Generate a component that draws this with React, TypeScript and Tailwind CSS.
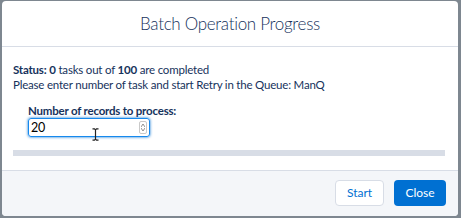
import React, { useState } from "react"

const App = () => {
  const [count, setCount] = useState("20")

  return (
    <div className="w-[461px] h-[218px] bg-[#7e8790] pl-[2px] pr-[3px] pt-[1px] pb-[2px] font-['Lato','Noto_Sans',sans-serif] text-[#16325c]">
      <div className="flex flex-col h-full bg-white rounded-[4px] overflow-hidden">
        <div className="h-[46px] flex items-center justify-center border-b border-[#d8dde6] shrink-0">
          <h2 className="text-[17px] font-light tracking-[-0.3px]">Batch Operation Progress</h2>
        </div>
        <div className="flex-1 bg-white pl-[11px] pr-[11px] pt-[15px] text-[11.5px] tracking-[-0.2px] text-[#16325c]">
          <p className="leading-[15px]">
            <b>Status:</b> <b>0</b> tasks out of <b>100</b> are completed
          </p>
          <p className="leading-[15px]">Please enter number of task and start Retry in the Queue: ManQ</p>
          <div className="pl-[15px] pt-[12px]">
            <label className="block font-bold leading-[14px] text-[11.5px]">Number of records to process:</label>
            <div className="relative w-[122px]">
              <input
                type="text"
                value={count}
                onChange={(e) => setCount(e.target.value)}
                className="w-full h-[19px] border border-[#1589ee] rounded-[3px] shadow-[0_0_3px_#0070d2] px-[2px] text-[12.5px] text-black outline-none"
              />
              <div className="absolute right-[3px] top-[3px] h-[13px] w-[8px] rounded-[2px] border border-[#c9c9c9] flex flex-col items-center justify-center gap-[1px]">
                <svg width="4" height="3" viewBox="0 0 4 3">
                  <path d="M0 3 L2 0 L4 3" fill="none" stroke="#777" strokeWidth="0.8" />
                </svg>
                <svg width="4" height="3" viewBox="0 0 4 3">
                  <path d="M0 0 L2 3 L4 0" fill="none" stroke="#777" strokeWidth="0.8" />
                </svg>
              </div>
              <svg className="absolute left-[64px] top-[10px]" width="7" height="13" viewBox="0 0 7 13">
                <path d="M0.5 0.8 H2.5 L3.5 1.8 L4.5 0.8 H6.5 M3.5 1.8 V11.2 M0.5 12.2 H2.5 L3.5 11.2 L4.5 12.2 H6.5" fill="none" stroke="#222" strokeWidth="1.2" />
              </svg>
            </div>
          </div>
          <div className="mt-[13px] h-[6px] bg-[#d8dde6] mr-[2px]" />
        </div>
        <div className="h-[46px] shrink-0 bg-[#f4f6f9] border-t border-[#d8dde6] flex items-center justify-end gap-[10px] pr-[12px] pb-[1px]">
          <button className="h-[26px] w-[49px] rounded-[4px] border border-[#d8dde6] bg-white text-[#0070d2] text-[12px]">
            Start
          </button>
          <button className="h-[26px] w-[52px] rounded-[4px] bg-[#0070d2] text-white text-[12px]">
            Close
          </button>
        </div>
      </div>
    </div>
  )
}

export default App
